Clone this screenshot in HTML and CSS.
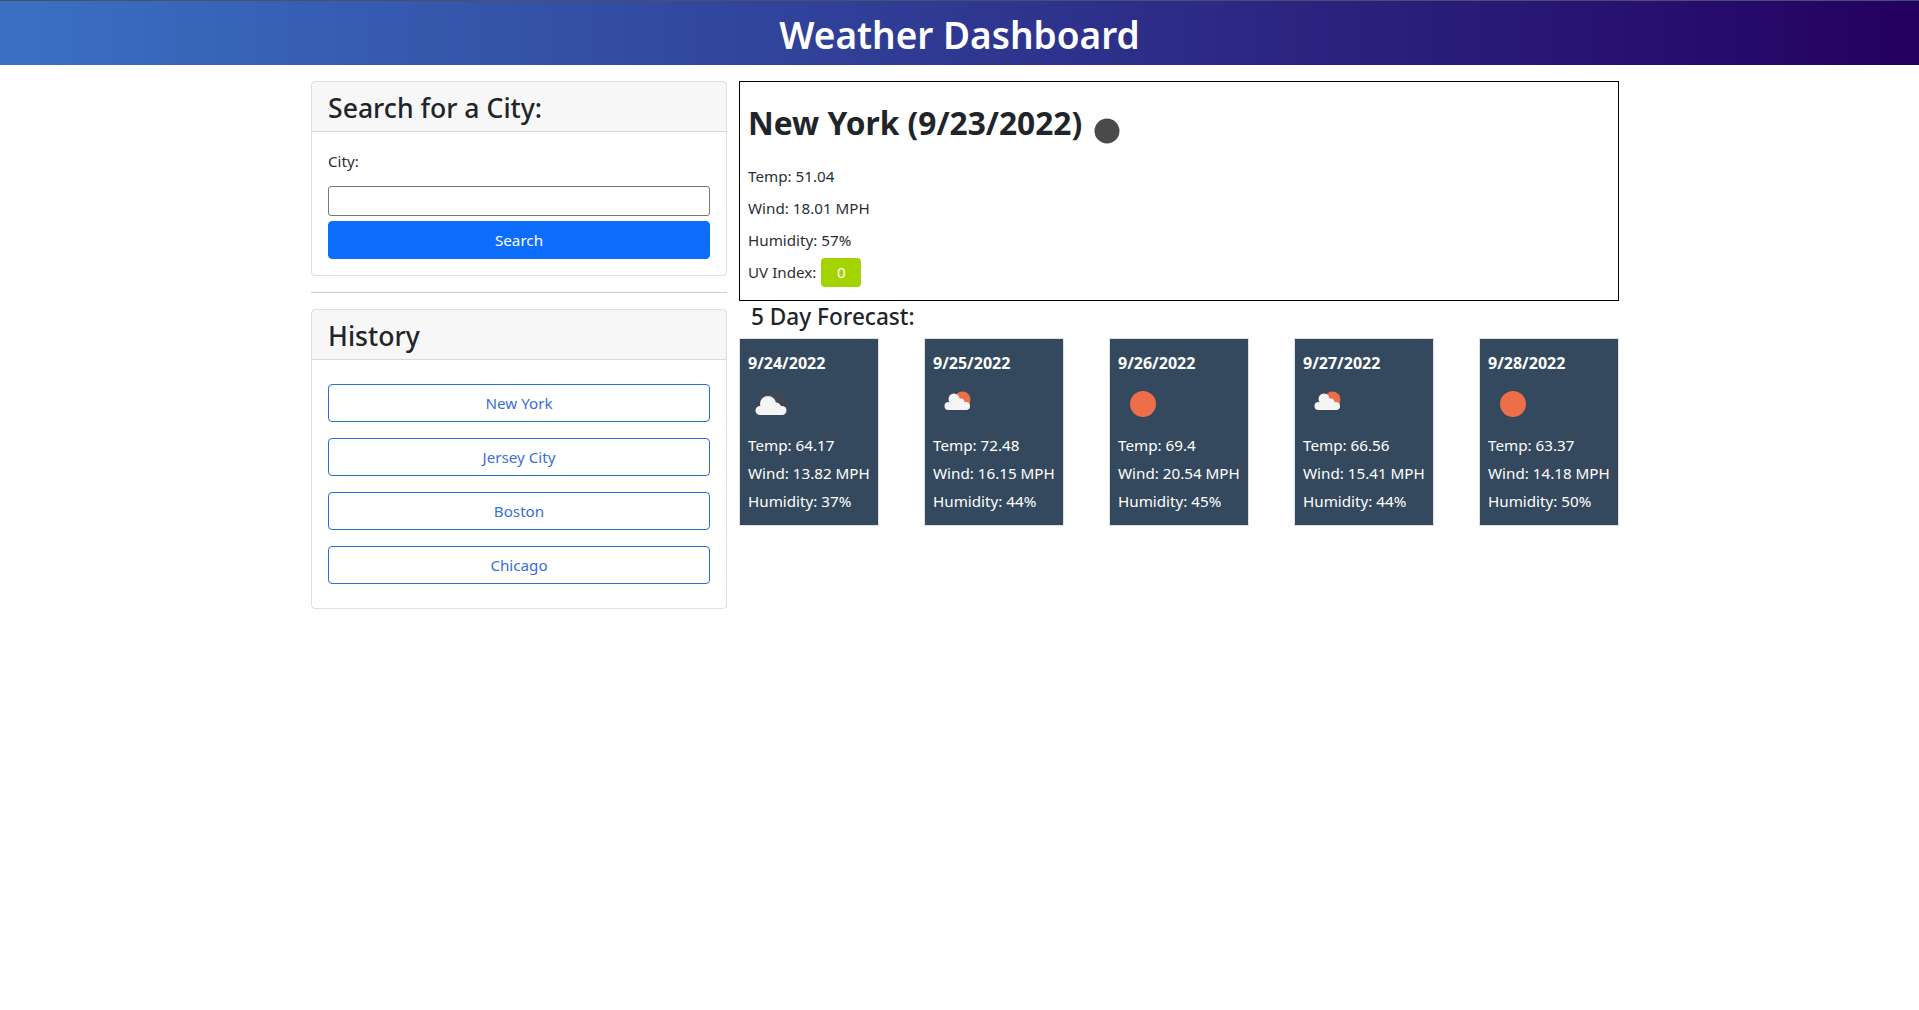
FILE: index.html
```html
<!DOCTYPE html>
<html lang="en">
<head>
    <meta charset="UTF-8">
    <meta name="viewport" content="width=device-width, initial-scale=1.0">
    <title>Weather Dashboard</title>
    <link rel="stylesheet" href="styles.css">
</head>
<body>

<svg class="icon-defs" aria-hidden="true">
    <symbol id="cloud-big" viewBox="0 0 50 50">
        <circle cx="12" cy="31.5" r="4.5"/>
        <circle cx="20" cy="25" r="8"/>
        <circle cx="28" cy="28.5" r="5"/>
        <circle cx="34" cy="31.5" r="4.5"/>
        <rect x="12" y="28" width="22" height="8"/>
    </symbol>
    <symbol id="cloud-small" viewBox="0 0 50 50">
        <circle cx="15.5" cy="27" r="4"/>
        <circle cx="21" cy="20" r="5.5"/>
        <circle cx="27.5" cy="23.5" r="4"/>
        <circle cx="33" cy="27" r="4"/>
        <rect x="15.5" y="24" width="17.5" height="7"/>
    </symbol>
</svg>

<header class="top-bar">
    <h1>Weather Dashboard</h1>
</header>

<main class="container">
    <section class="side-col">
        <div class="card">
            <h3 class="card-header">Search for a City:</h3>
            <form class="card-body search-body">
                <label for="city">City:</label>
                <input type="text" id="city" name="city">
                <button type="button" class="btn-search">Search</button>
            </form>
        </div>

        <hr class="divider">

        <div class="card">
            <h3 class="card-header">History</h3>
            <div class="card-body history-body">
                <button type="button" class="btn-history">New York</button>
                <button type="button" class="btn-history">Jersey City</button>
                <button type="button" class="btn-history">Boston</button>
                <button type="button" class="btn-history">Chicago</button>
            </div>
        </div>
    </section>

    <section class="main-col">
        <div class="today">
            <div class="today-title">
                <h2>New York (9/23/2022)</h2>
                <svg class="today-icon" viewBox="0 0 50 50"><circle cx="25" cy="25" r="12.5" fill="#4a4a4a"/></svg>
            </div>
            <p>Temp: 51.04</p>
            <p>Wind: 18.01 MPH</p>
            <p>Humidity: 57%</p>
            <p class="uv-row">UV Index: <span class="uv-badge">0</span></p>
        </div>

        <h4 class="forecast-title">5 Day Forecast:</h4>

        <div class="forecast">
            <div class="day">
                <h5>9/24/2022</h5>
                <svg class="day-icon" viewBox="0 0 50 50">
                    <circle cx="28.5" cy="24" r="11" fill="#4a4a4a" opacity="0.6"/>
                    <use href="#cloud-big" fill="#f5f5f5"/>
                </svg>
                <p>Temp: 64.17</p>
                <p>Wind: 13.82 MPH</p>
                <p>Humidity: 37%</p>
            </div>
            <div class="day">
                <h5>9/25/2022</h5>
                <svg class="day-icon" viewBox="0 0 50 50">
                    <circle cx="29.5" cy="20.5" r="8" fill="#ee6e4a"/>
                    <use href="#cloud-small" fill="#f5f5f5"/>
                </svg>
                <p>Temp: 72.48</p>
                <p>Wind: 16.15 MPH</p>
                <p>Humidity: 44%</p>
            </div>
            <div class="day">
                <h5>9/26/2022</h5>
                <svg class="day-icon" viewBox="0 0 50 50"><circle cx="25" cy="25" r="13" fill="#ee6e4a"/></svg>
                <p>Temp: 69.4</p>
                <p>Wind: 20.54 MPH</p>
                <p>Humidity: 45%</p>
            </div>
            <div class="day">
                <h5>9/27/2022</h5>
                <svg class="day-icon" viewBox="0 0 50 50">
                    <circle cx="29.5" cy="20.5" r="8" fill="#ee6e4a"/>
                    <use href="#cloud-small" fill="#f5f5f5"/>
                </svg>
                <p>Temp: 66.56</p>
                <p>Wind: 15.41 MPH</p>
                <p>Humidity: 44%</p>
            </div>
            <div class="day">
                <h5>9/28/2022</h5>
                <svg class="day-icon" viewBox="0 0 50 50"><circle cx="25" cy="25" r="13" fill="#ee6e4a"/></svg>
                <p>Temp: 63.37</p>
                <p>Wind: 14.18 MPH</p>
                <p>Humidity: 50%</p>
            </div>
        </div>
    </section>
</main>

</body>
</html>
```

FILE: styles.css
```css
* {
    box-sizing: border-box;
}

body {
    margin: 0;
    font-family: "Noto Sans", "Open Sans", sans-serif;
    font-size: 15.2px;
    line-height: 24px;
    color: #2b2f33;
    background-color: #fff;
}

h1, h2, h3, h4, h5, p {
    margin: 0;
}

.icon-defs {
    display: none;
}

.top-bar {
    height: 65px;
    border-top: 1px solid #4a4f6e;
    background: linear-gradient(to right, #3a71c3, #240060);
    color: #fff;
    text-align: center;
}

.top-bar h1 {
    font-size: 37px;
    font-weight: 600;
    line-height: 67px;
}

.container {
    display: flex;
    width: 1320px;
    margin-left: 299px;
    padding-top: 16px;
}

.side-col {
    width: 440px;
    padding: 0 12px;
}

.main-col {
    width: 880px;
}

.card {
    border: 1px solid rgba(0, 0, 0, 0.125);
    border-radius: 4px;
}

.card-header {
    padding: 10px 16px 6px;
    font-size: 26.6px;
    font-weight: 500;
    line-height: 33px;
    color: #212529;
    background-color: rgba(0, 0, 0, 0.03);
    border-bottom: 1px solid rgba(0, 0, 0, 0.125);
}

.search-body {
    display: flex;
    flex-direction: column;
    padding: 17px 16px 16px;
}

.search-body label {
    margin-bottom: 13px;
}

.search-body input {
    height: 30px;
    border: 1px solid #767676;
    border-radius: 3px;
    font-size: 16px;
}

.btn-search {
    height: 38px;
    margin-top: 5px;
    border: 1px solid #0d6efd;
    border-radius: 4px;
    background-color: #0d6efd;
    color: #fff;
    font-family: inherit;
    font-size: 15.2px;
}

.divider {
    margin: 16px 0;
    border: 0;
    border-top: 1px solid #ccc;
}

.history-body {
    display: flex;
    flex-direction: column;
    gap: 16px;
    padding: 24px 16px;
}

.btn-history {
    height: 38px;
    border: 1px solid #2a6fd0;
    border-radius: 4px;
    background-color: #fff;
    color: #3a6fd8;
    font-family: inherit;
    font-size: 15.2px;
}

.today {
    height: 220px;
    padding: 0 8px;
    border: 1px solid #000;
}

.today p {
    margin-bottom: 8px;
}

.today-title {
    display: flex;
    align-items: center;
    height: 66px;
    margin: 8px 0;
}

.today-title h2 {
    font-size: 31.7px;
    font-weight: 700;
    line-height: 38px;
    color: #212529;
}

.today-icon {
    width: 50px;
    height: 50px;
    margin-top: 16px;
}

.uv-row {
    display: flex;
    align-items: center;
    gap: 5px;
    height: 24px;
}

.uv-badge {
    width: 40px;
    height: 29px;
    border-radius: 4px;
    background-color: #a3d400;
    color: #fff;
    text-align: center;
    line-height: 29px;
}

.forecast-title {
    margin: 1px 0 7px;
    padding-left: 12px;
    font-size: 22.6px;
    font-weight: 500;
    line-height: 29px;
    color: #212529;
}

.forecast {
    display: flex;
    justify-content: space-between;
}

.day {
    width: 140px;
    height: 188px;
    padding: 12px 8px;
    border: 1px solid #dee2e6;
    background-color: #34495e;
    color: #fff;
    white-space: nowrap;
}

.day h5 {
    margin-bottom: 4px;
    font-size: 16px;
    font-weight: 700;
}

.day-icon {
    display: block;
    width: 50px;
    height: 50px;
    margin-bottom: 4px;
}

.day p {
    margin-bottom: 4px;
}
```
